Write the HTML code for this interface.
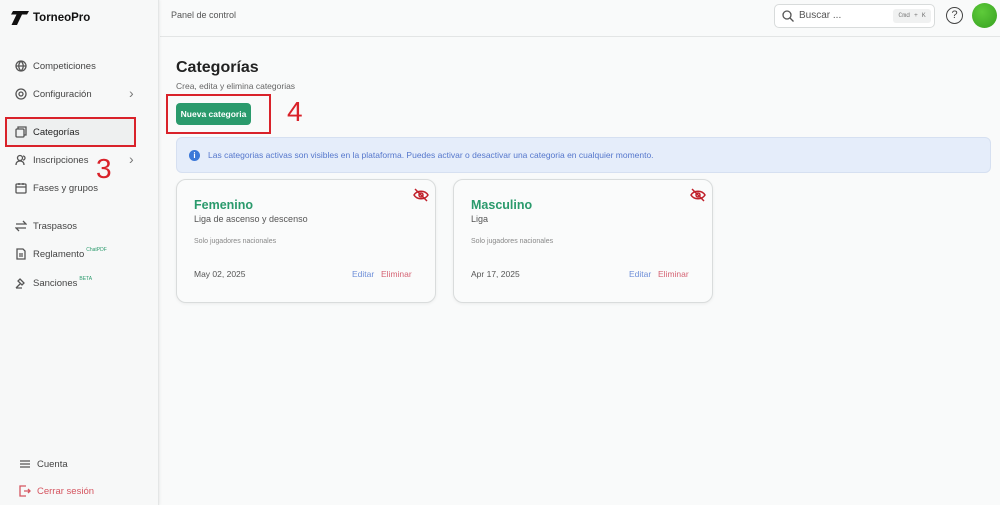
<!DOCTYPE html><html><head><meta charset="utf-8"><style>
*{box-sizing:border-box;margin:0;padding:0}
body{width:1000px;height:505px;overflow:hidden;font-family:"Liberation Sans",sans-serif;background:#f7f8f8;position:relative;color:#333}
.side{position:absolute;left:0;top:0;width:159px;height:505px;background:#f7f8f8;border-right:1px solid #e4e6e6;box-shadow:1px 0 3px rgba(0,0,0,.05)}
.main{position:absolute;left:160px;top:0;right:0;bottom:0;background:#f9fafa}
.top{position:absolute;left:160px;top:0;right:0;height:37px;border-bottom:1px solid #e3e5e5;background:#f9fafa}
.nav{position:absolute;left:15px;font-size:9.5px;color:#444;display:flex;align-items:center}
.nav svg{width:12px;height:12px;margin-right:6px;stroke:#555;fill:none;stroke-width:1.3}
.chev{position:absolute;left:129px;font-size:14px;color:#777}
.card{position:absolute;top:179px;width:260px;height:124px;border:1px solid #d9dcdc;border-radius:10px;background:#fafbfb;box-shadow:0 1px 3px rgba(0,0,0,.06)}
.card .t{position:absolute;left:17px;top:18px;font-size:12.5px;color:#2a9a6c;font-weight:600}
.card .s{position:absolute;left:17px;top:34px;font-size:9px;color:#555}
.card .n{position:absolute;left:17px;top:58px;font-size:7px;color:#888}
.card .d{position:absolute;left:17px;top:89px;font-size:8.5px;color:#555}
.card .e{position:absolute;left:175px;top:89px;font-size:8.5px;color:#6e8fd8}
.card .x{position:absolute;left:204px;top:89px;font-size:8.5px;color:#d56474}
.card svg{position:absolute;right:6px;top:8px}
</style></head><body>
<div class="main"></div>
<div class="top"><span style="position:absolute;left:11px;top:10px;font-size:9px;color:#555">Panel de control</span>
<div style="position:absolute;left:614px;top:4px;width:161px;height:24px;border:1px solid #d8dbdb;border-radius:5px;background:#fff">
<svg width="12" height="12" style="position:absolute;left:7px;top:5px" fill="none" stroke="#555" stroke-width="1.3"><circle cx="5" cy="5" r="4"/><path d="M8 8l3.5 3.5"/></svg>
<span style="position:absolute;left:24px;top:5px;font-size:10px;color:#555">Buscar ...</span>
<span style="position:absolute;left:118px;top:4px;width:38px;height:14px;background:#f0f1f1;border-radius:3px;font-size:6.5px;color:#777;text-align:center;line-height:14px;font-family:'Liberation Mono',monospace">Cmd + K</span></div>
<div style="position:absolute;left:786px;top:7px;width:17px;height:17px;border:1.3px solid #444;border-radius:50%;font-size:11px;text-align:center;line-height:15px;color:#444">?</div>
<div style="position:absolute;left:812px;top:3px;width:25px;height:25px;border-radius:50%;background:radial-gradient(circle at 40% 35%,#5ecb3a,#36a020)"></div>
</div>
<div class="side">
<div style="position:absolute;left:10px;top:10px;font-size:11.5px;font-weight:bold;color:#111;display:flex;align-items:center"><svg width="20" height="16" style="margin-right:3px"><path d="M3 1h16l-2 3.5h-5L7 15H1.5l5-10.5H1z" fill="#111"/></svg>TorneoPro</div>
<div class="nav" style="top:60px"><svg viewBox="0 0 12 12"><circle cx="6" cy="6" r="5"/><path d="M1 6h10M6 1c-3 3-3 7 0 10M6 1c3 3 3 7 0 10"/></svg>Competiciones</div>
<div class="nav" style="top:88px"><svg viewBox="0 0 12 12"><circle cx="6" cy="6" r="2"/><circle cx="6" cy="6" r="5"/></svg>Configuración</div><span class="chev" style="top:85px">›</span>
<div style="position:absolute;left:5px;top:117px;width:131px;height:30px;border:2px solid #d9222a;background:#eef0f0"></div>
<div class="nav" style="top:126px;color:#222"><svg viewBox="0 0 12 12"><rect x="1" y="3" width="8" height="8" rx="1"/><path d="M3 3V1h8v8H9"/></svg>Categorías</div>
<div class="nav" style="top:154px"><svg viewBox="0 0 12 12"><circle cx="5" cy="4" r="2.5"/><path d="M1 11c0-3 2-4 4-4s4 1 4 4M8 2a2 2 0 010 4"/></svg>Inscripciones</div><span class="chev" style="top:151px">›</span>
<span style="position:absolute;left:96px;top:153px;font-size:28px;color:#d9222a">3</span>
<div class="nav" style="top:182px"><svg viewBox="0 0 12 12"><rect x="1" y="2" width="10" height="9" rx="1"/><path d="M1 5h10M4 1v2M8 1v2"/></svg>Fases y grupos</div>
<div class="nav" style="top:220px"><svg viewBox="0 0 12 12"><path d="M1 4h10L8 1M11 8H1l3 3"/></svg>Traspasos</div>
<div class="nav" style="top:248px"><svg viewBox="0 0 12 12"><path d="M2 1h6l2 2v8H2z M4 6h4M4 8h4"/></svg>Reglamento<sup style="font-size:5px;color:#2a9a6c;margin-left:2px;margin-top:-8px">ChatPDF</sup></div>
<div class="nav" style="top:277px"><svg viewBox="0 0 12 12"><path d="M5 2l4 4-2 2-4-4zM5 7l-4 4M1 11h6"/></svg>Sanciones<sup style="font-size:5px;color:#2a9a6c;margin-left:2px;margin-top:-8px">BETA</sup></div>
<div class="nav" style="top:458px;left:19px"><svg viewBox="0 0 12 12"><path d="M1 3h10M1 6h10M1 9h10"/></svg>Cuenta</div>
<div class="nav" style="top:485px;left:19px;color:#d55560"><svg viewBox="0 0 12 12" style="stroke:#d55560"><path d="M7 1H1v10h6M5 6h6M9 4l2 2-2 2"/></svg>Cerrar sesión</div>
</div>
<div style="position:absolute;left:176px;top:59px;font-size:16px;font-weight:bold;color:#222">Categorías</div>
<div style="position:absolute;left:176px;top:81px;font-size:8.5px;color:#666">Crea, edita y elimina categorias</div>
<div style="position:absolute;left:166px;top:94px;width:105px;height:40px;border:2px solid #d9222a"></div>
<div style="position:absolute;left:176px;top:103px;width:75px;height:22px;background:#2a9a6c;border-radius:4px;color:#fff;font-size:8.5px;font-weight:bold;text-align:center;line-height:22px">Nueva categoria</div>
<span style="position:absolute;left:287px;top:96px;font-size:28px;color:#d9222a">4</span>
<div style="position:absolute;left:176px;top:137px;width:815px;height:36px;background:#e5edfa;border:1px solid #d6e0f1;border-radius:6px">
<div style="position:absolute;left:12px;top:12px;width:11px;height:11px;border-radius:50%;background:#3b78d8;color:#fff;font-size:8px;font-weight:bold;text-align:center;line-height:11px">i</div>
<span style="position:absolute;left:31px;top:12px;font-size:8.5px;color:#5577cc">Las categorias activas son visibles en la plataforma. Puedes activar o desactivar una categoria en cualquier momento.</span></div>
<div class="card" style="left:176px"><span class="t">Femenino</span><span class="s">Liga de ascenso y descenso</span><span class="n">Solo jugadores nacionales</span><span class="d">May 02, 2025</span><span class="e">Editar</span><span class="x">Eliminar</span>
<svg width="16" height="14" fill="none" stroke="#c0202a" stroke-width="1.5"><path d="M1 7c3-5 11-5 14 0c-3 5-11 5-14 0z"/><circle cx="8" cy="7" r="2"/><path d="M2 1l12 12"/></svg></div>
<div class="card" style="left:453px"><span class="t">Masculino</span><span class="s">Liga</span><span class="n">Solo jugadores nacionales</span><span class="d">Apr 17, 2025</span><span class="e">Editar</span><span class="x">Eliminar</span>
<svg width="16" height="14" fill="none" stroke="#c0202a" stroke-width="1.5"><path d="M1 7c3-5 11-5 14 0c-3 5-11 5-14 0z"/><circle cx="8" cy="7" r="2"/><path d="M2 1l12 12"/></svg></div>
</body></html>
